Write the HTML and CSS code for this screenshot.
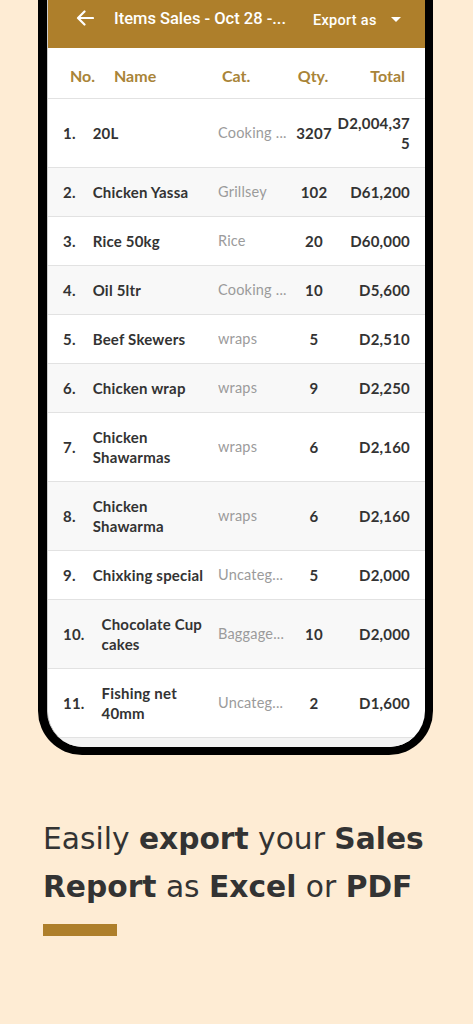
FILE: index.html
```html
<!DOCTYPE html>
<html>
<head>
<meta charset="utf-8">
<link rel="stylesheet" href="styles.css">
</head>
<body>
<div class="phone">
  <div class="screen">
    <div class="appbar">
      <svg class="back" width="18" height="16" viewBox="0 0 18 16"><path d="M17 8H2.5M8.5 1.5L2 8l6.5 6.5" fill="none" stroke="#fff" stroke-width="2.2" stroke-linecap="round" stroke-linejoin="round"/></svg>
      <div class="title">Items Sales - Oct 28 -...</div>
      <div class="export">Export as</div>
      <svg class="caret" width="10" height="6" viewBox="0 0 10 6"><path d="M0 0h10L5 5z" fill="#fff"/></svg>
    </div>
    <div class="thead">
      <div class="h-no">No.</div>
      <div class="h-name">Name</div>
      <div class="h-cat">Cat.</div>
      <div class="h-qty">Qty.</div>
      <div class="h-total">Total</div>
    </div>
    <div class="row">
      <div class="no">1.</div><div class="name">20L</div><div class="cat">Cooking ...</div><div class="qty">3207</div><div class="total">D2,004,375</div>
    </div>
    <div class="row alt">
      <div class="no">2.</div><div class="name">Chicken Yassa</div><div class="cat">Grillsey</div><div class="qty">102</div><div class="total">D61,200</div>
    </div>
    <div class="row">
      <div class="no">3.</div><div class="name">Rice 50kg</div><div class="cat">Rice</div><div class="qty">20</div><div class="total">D60,000</div>
    </div>
    <div class="row alt">
      <div class="no">4.</div><div class="name">Oil 5ltr</div><div class="cat">Cooking ...</div><div class="qty">10</div><div class="total">D5,600</div>
    </div>
    <div class="row">
      <div class="no">5.</div><div class="name">Beef Skewers</div><div class="cat">wraps</div><div class="qty">5</div><div class="total">D2,510</div>
    </div>
    <div class="row alt">
      <div class="no">6.</div><div class="name">Chicken wrap</div><div class="cat">wraps</div><div class="qty">9</div><div class="total">D2,250</div>
    </div>
    <div class="row">
      <div class="no">7.</div><div class="name">Chicken<br>Shawarmas</div><div class="cat">wraps</div><div class="qty">6</div><div class="total">D2,160</div>
    </div>
    <div class="row alt">
      <div class="no">8.</div><div class="name">Chicken<br>Shawarma</div><div class="cat">wraps</div><div class="qty">6</div><div class="total">D2,160</div>
    </div>
    <div class="row">
      <div class="no">9.</div><div class="name">Chixking special</div><div class="cat">Uncateg...</div><div class="qty">5</div><div class="total">D2,000</div>
    </div>
    <div class="row alt">
      <div class="no">10.</div><div class="name">Chocolate Cup<br>cakes</div><div class="cat">Baggage...</div><div class="qty">10</div><div class="total">D2,000</div>
    </div>
    <div class="row">
      <div class="no">11.</div><div class="name">Fishing net<br>40mm</div><div class="cat">Uncateg...</div><div class="qty">2</div><div class="total">D1,600</div>
    </div>
    <div class="row-peek"></div>
  </div>
</div>
<div class="caption">
  <p class="headline">Easily <b>export</b> your <b>Sales</b><br><b>Report</b> as <b>Excel</b> or <b>PDF</b></p>
  <div class="bar"></div>
</div>
</body>
</html>
```
FILE: styles.css
```css
* { box-sizing: border-box; }
html, body { margin: 0; padding: 0; }
body {
  width: 473px;
  height: 1024px;
  background: #feecd4;
  font-family: Lato, "Open Sans", sans-serif;
  overflow: hidden;
}
.phone {
  margin: 0 40px 0 38px;
  background: #000;
  padding: 0 8px 8px 9px;
  border-radius: 0 0 44px 44px;
}
.screen {
  background: #fff;
  border-radius: 0 0 36px 36px;
  overflow: hidden;
  border-left: 1px solid #ccc;
}
.appbar {
  height: 48px;
  background: #ae7f2b;
  display: flex;
  align-items: center;
  padding: 0 0 12px 28px;
  color: #fff;
  font-family: Roboto, sans-serif;
}
.back { flex: none; }
.title {
  margin-left: 20px;
  font-size: 16.5px;
  font-weight: 500;
  width: 178px;
  white-space: nowrap;
}
.export {
  margin-left: 21px;
  margin-top: 5px;
  font-size: 14.5px;
  font-weight: 500;
  letter-spacing: 0.3px;
}
.caret { margin-left: 14px; margin-top: 3px; }
.thead {
  height: 51px;
  display: flex;
  align-items: center;
  padding: 4px 20px 0 22px;
  color: #a98438;
  font-weight: 700;
  font-size: 16px;
  border-bottom: 1px solid #e2e2e2;
}
.h-no { width: 44px; }
.h-name { width: 108px; }
.h-cat { width: 75px; }
.h-qty { width: 32px; text-align: center; }
.h-total { flex: 1; text-align: right; }
.row {
  display: flex;
  align-items: center;
  padding: 14px 15px 14px 15px;
  border-bottom: 1px solid #e2e2e2;
  font-size: 15px;
  line-height: 20px;
  color: #333;
  font-weight: 700;
  letter-spacing: 0.2px;
}
.row.alt { background: #f8f8f8; }
.no { flex: none; margin-right: 17px; }
.name { flex: 1; min-width: 0; }
.cat {
  width: 76px;
  flex: none;
  color: #9b9b9b;
  font-weight: 400;
  font-size: 14.5px;
  white-space: nowrap;
  overflow: hidden;
}
.qty { width: 40px; flex: none; text-align: center; margin-right: 2px; }
.total {
  width: 74px;
  flex: none;
  text-align: right;
  word-break: break-all;
}
.row-peek { height: 9px; background: #f3f3f3; }
.caption {
  padding: 60px 20px 0 43px;
}
.headline {
  margin: 0;
  font-family: "DejaVu Sans", sans-serif;
  font-size: 29.7px;
  line-height: 48px;
  color: #333;
  font-weight: 400;
  white-space: nowrap;
}
.headline b { font-weight: 700; }
.bar {
  margin-top: 13px;
  width: 74px;
  height: 12px;
  background: #ae7f2b;
}
```
